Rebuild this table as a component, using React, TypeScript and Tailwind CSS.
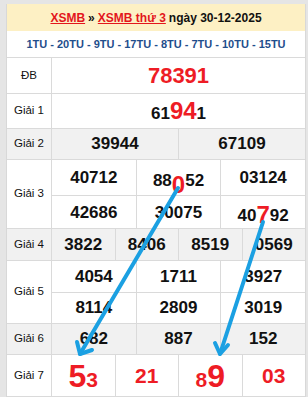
import React from 'react';

const RED = 'text-[#ee1c25]';

function Label({ text }: { text: string }) {
    return (
        <div className="w-[45px] shrink-0 border-r border-[#dadada] flex items-center justify-center text-[11.5px] text-[#111]">
            {text}
        </div>
    );
}

function Cell({ children, last = false, className = '' }: { children: React.ReactNode; last?: boolean; className?: string }) {
    return (
        <div className={`flex-1 basis-0 flex items-center justify-center ${last ? '' : 'border-r border-[#dadada]'} ${className}`}>
            {children}
        </div>
    );
}

function NumRow({ nums, h, top = false }: { nums: React.ReactNode[]; h: string; top?: boolean }) {
    return (
        <div className={`flex ${h} ${top ? 'border-t border-[#dadada]' : ''}`}>
            {nums.map((n, i) => (
                <Cell key={i} last={i === nums.length - 1}>
                    <span className="text-[17px] font-bold text-[#111]">{n}</span>
                </Cell>
            ))}
        </div>
    );
}

export default function App() {
    return (
        <div className="relative w-[308px] h-[397px] overflow-hidden bg-[#e5e5e5] pt-[4px] pl-[6px] pr-[2px] font-['Liberation_Sans',Arial,sans-serif]">
            <div className="w-[300px] bg-white border-x border-[#d8d8d8]">
                {/* Header */}
                <div className="h-[27px] bg-[#fdf0c4] flex items-center justify-center text-[12px] font-bold text-[#111]">
                    <span className="text-[#e3161c] underline">XSMB</span>
                    <span className="mx-[3px]">»</span>
                    <span className="text-[#e3161c] underline">XSMB thứ 3</span>
                    <span className="ml-[3px]">ngày 30-12-2025</span>
                </div>

                {/* Nav */}
                <div className="h-[27px] border-b border-[#dadada] flex items-center justify-center text-[11px] font-bold text-[#1f4e8c]">
                    1TU - 20TU - 9TU - 17TU - 8TU - 7TU - 10TU - 15TU
                </div>

                {/* ĐB */}
                <div className="flex h-[36px] border-b border-[#dadada]">
                    <Label text="ĐB" />
                    <Cell last>
                        <span className={`text-[22px] font-bold ${RED}`}>78391</span>
                    </Cell>
                </div>

                {/* Giải 1 */}
                <div className="flex h-[35px] border-b border-[#dadada]">
                    <Label text="Giải 1" />
                    <Cell last>
                        <span className="text-[17px] font-bold text-[#111]">
                            61<span className={`text-[24px] ${RED}`}>94</span>1
                        </span>
                    </Cell>
                </div>

                {/* Giải 2 */}
                <div className="flex h-[31px] border-b border-[#dadada] bg-[#f1f1f1]">
                    <Label text="Giải 2" />
                    <div className="flex-1 flex">
                        <Cell><span className="text-[17px] font-bold text-[#111]">39944</span></Cell>
                        <Cell last><span className="text-[17px] font-bold text-[#111]">67109</span></Cell>
                    </div>
                </div>

                {/* Giải 3 */}
                <div className="flex h-[69px] border-b border-[#dadada]">
                    <Label text="Giải 3" />
                    <div className="flex-1 flex flex-col">
                        <NumRow
                            h="h-[35px]"
                            nums={[
                                '40712',
                                <>88<span className={`relative top-[7px] text-[24px] ${RED}`}>0</span>52</>,
                                '03124',
                            ]}
                        />
                        <NumRow
                            h="h-[34px]"
                            top
                            nums={[
                                '42686',
                                '30075',
                                <>40<span className={`relative top-[2px] text-[24px] ${RED}`}>7</span>92</>,
                            ]}
                        />
                    </div>
                </div>

                {/* Giải 4 */}
                <div className="flex h-[32px] border-b border-[#dadada] bg-[#f1f1f1]">
                    <Label text="Giải 4" />
                    <div className="flex-1">
                        <NumRow h="h-full" nums={['3822', '8406', '8519', '0569']} />
                    </div>
                </div>

                {/* Giải 5 */}
                <div className="flex h-[63px] border-b border-[#dadada]">
                    <Label text="Giải 5" />
                    <div className="flex-1 flex flex-col">
                        <NumRow h="h-[31px]" nums={['4054', '1711', '3927']} />
                        <NumRow h="h-[32px]" top nums={['8114', '2809', '3019']} />
                    </div>
                </div>

                {/* Giải 6 */}
                <div className="flex h-[31px] border-b border-[#dadada] bg-[#f1f1f1]">
                    <Label text="Giải 6" />
                    <div className="flex-1">
                        <NumRow h="h-full" nums={['682', '887', '152']} />
                    </div>
                </div>

                {/* Giải 7 */}
                <div className="flex h-[42px] border-b border-[#dadada]">
                    <Label text="Giải 7" />
                    <div className="flex-1 flex">
                        <Cell><span className={`text-[21px] font-bold ${RED}`}><span className="text-[32px]">5</span>3</span></Cell>
                        <Cell><span className={`text-[21px] font-bold ${RED}`}>21</span></Cell>
                        <Cell><span className={`text-[21px] font-bold ${RED}`}>8<span className="text-[32px]">9</span></span></Cell>
                        <Cell last><span className={`text-[21px] font-bold ${RED}`}>03</span></Cell>
                    </div>
                </div>
            </div>

            {/* Arrows drawn over the table */}
            <svg className="absolute inset-0 pointer-events-none" width="308" height="397" viewBox="0 0 308 397">
                <g stroke="#1ba0e2" strokeWidth="4" strokeLinecap="round" fill="none">
                    <path d="M178 188 L80 354" />
                    <path d="M80 354 L77 342 M80 354 L92 350" />
                    <path d="M263 222 L220 354" />
                    <path d="M220 354 L215 343 M220 354 L228 345" />
                </g>
            </svg>
        </div>
    );
}
